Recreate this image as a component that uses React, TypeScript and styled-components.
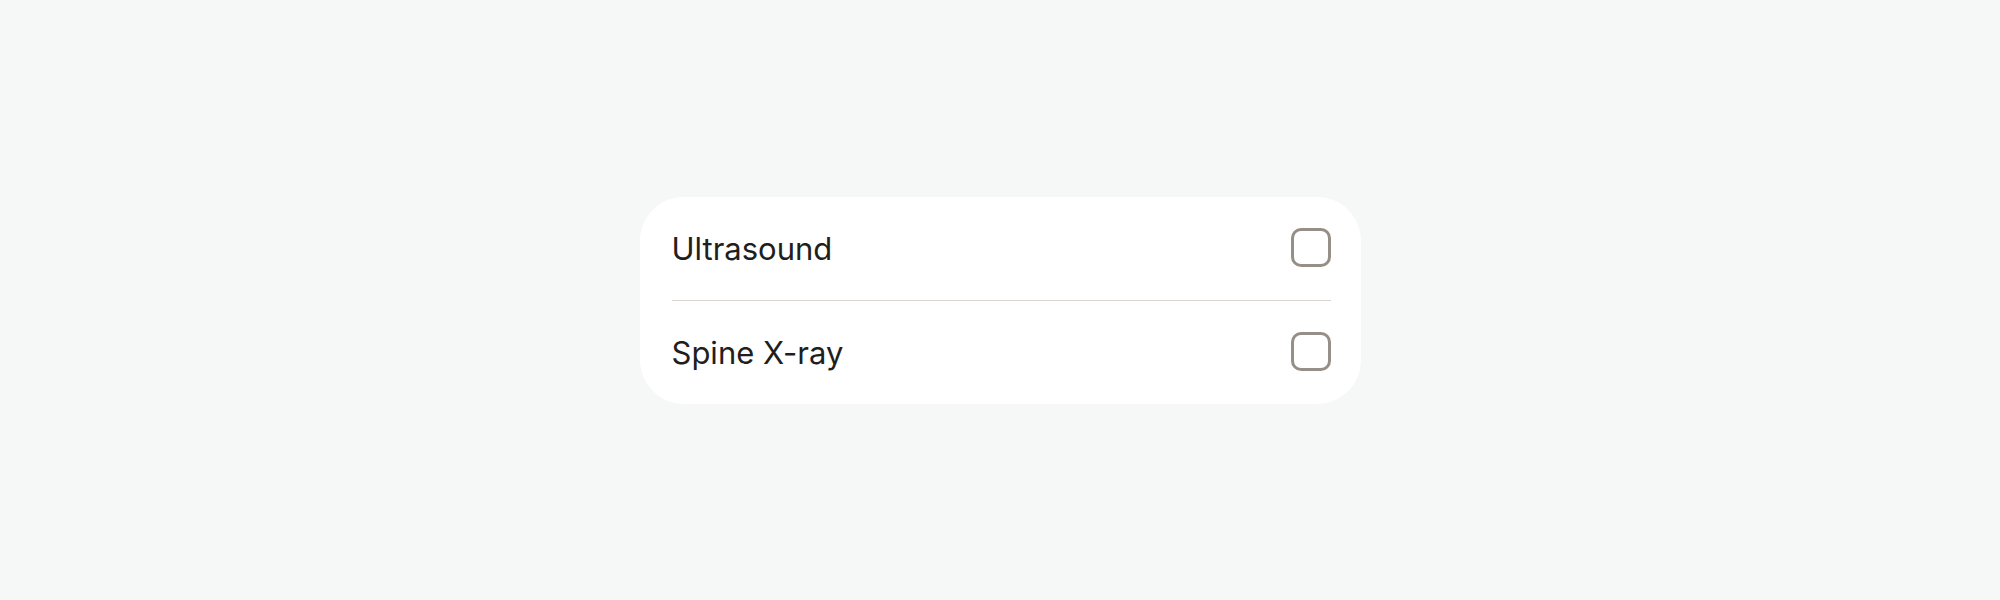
import React, { useState } from "react";
import styled, { createGlobalStyle } from "styled-components";

const Global = createGlobalStyle`
  html, body { margin: 0; padding: 0; }
  body {
    background: #f6f8f7;
    font-family: Inter, "Noto Sans", "Liberation Sans", sans-serif;
  }
`;

const Page = styled.div`
  width: 2000px;
  height: 600px;
  display: flex;
  align-items: center;
  justify-content: center;
`;

const Card = styled.div`
  width: 721px;
  box-sizing: border-box;
  background: #ffffff;
  border-radius: 44px;
  padding: 0 30px 0 32px;
  display: flex;
  flex-direction: column;
`;

const Row = styled.label`
  height: 103px;
  display: flex;
  align-items: center;
  justify-content: space-between;
  cursor: pointer;
`;

const Label = styled.span`
  font-size: 31px;
  line-height: 38px;
  color: #211e1c;
  letter-spacing: 0;
  padding-top: 2px;
`;

const Divider = styled.div`
  height: 1px;
  background: #dad5ce;
`;

const Box = styled.span<{ $checked: boolean }>`
  width: 40px;
  height: 39px;
  box-sizing: border-box;
  border: 3px solid #958f88;
  border-radius: 10px;
  background: ${(p) => (p.$checked ? "#958f88" : "transparent")};
  margin-top: -1px;
`;

const items = ["Ultrasound", "Spine X-ray"];

export default function App() {
  const [checked, setChecked] = useState<boolean[]>([false, false]);
  return (
    <>
      <Global />
      <Page>
        <Card>
          {items.map((name, i) => (
            <React.Fragment key={name}>
              {i > 0 && <Divider />}
              <Row
                onClick={() =>
                  setChecked((c) => c.map((v, j) => (j === i ? !v : v)))
                }
              >
                <Label>{name}</Label>
                <Box $checked={checked[i]} />
              </Row>
            </React.Fragment>
          ))}
        </Card>
      </Page>
    </>
  );
}
